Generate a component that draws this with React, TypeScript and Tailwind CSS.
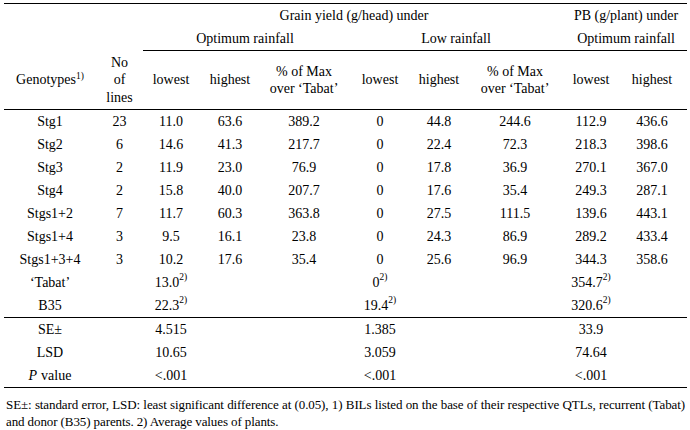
import React from "react";

const cols = "grid grid-cols-[92px_47px_56px_62px_86px_66px_52px_100px_52px_70px]";

const Sup = ({ children }: { children: React.ReactNode }) => (
  <span className="text-[9.5px] relative top-[-5px] leading-none">{children}</span>
);

type Cell = React.ReactNode;

const data: Cell[][] = [
  ["Stg1", "23", "11.0", "63.6", "389.2", "0", "44.8", "244.6", "112.9", "436.6"],
  ["Stg2", "6", "14.6", "41.3", "217.7", "0", "22.4", "72.3", "218.3", "398.6"],
  ["Stg3", "2", "11.9", "23.0", "76.9", "0", "17.8", "36.9", "270.1", "367.0"],
  ["Stg4", "2", "15.8", "40.0", "207.7", "0", "17.6", "35.4", "249.3", "287.1"],
  ["Stgs1+2", "7", "11.7", "60.3", "363.8", "0", "27.5", "111.5", "139.6", "443.1"],
  ["Stgs1+4", "3", "9.5", "16.1", "23.8", "0", "24.3", "86.9", "289.2", "433.4"],
  ["Stgs1+3+4", "3", "10.2", "17.6", "35.4", "0", "25.6", "96.9", "344.3", "358.6"],
  [
    "\u2018Tabat\u2019",
    "",
    <>13.0<Sup>2)</Sup></>,
    "",
    "",
    <>0<Sup>2)</Sup></>,
    "",
    "",
    <>354.7<Sup>2)</Sup></>,
    "",
  ],
  [
    "B35",
    "",
    <>22.3<Sup>2)</Sup></>,
    "",
    "",
    <>19.4<Sup>2)</Sup></>,
    "",
    "",
    <>320.6<Sup>2)</Sup></>,
    "",
  ],
];

const stats: Cell[][] = [
  ["SE\u00b1", "", "4.515", "", "", "1.385", "", "", "33.9", ""],
  ["LSD", "", "10.65", "", "", "3.059", "", "", "74.64", ""],
  [<><i className="mr-[4px]">P</i>value</>, "", "<.001", "", "", "<.001", "", "", "<.001", ""],
];

function Row({ cells }: { cells: Cell[] }) {
  return (
    <div className={cols}>
      {cells.map((c, i) => (
        <div key={i} className="h-[23px] flex items-center justify-center whitespace-nowrap">
          {c}
        </div>
      ))}
    </div>
  );
}

export default function App() {
  return (
    <div className="w-[690px] h-[430px] bg-white text-black font-[family-name:'Liberation_Serif','Times_New_Roman',serif] text-[14px] leading-[17.5px] overflow-hidden">
      <div className="pt-[3px] pl-[4px]">
        <div className="w-[683px] border-t border-black">
          {/* header row 1 */}
          <div className={cols}>
            <div className="col-span-2 h-[23px]" />
            <div className="col-span-6 h-[23px] flex items-center justify-center whitespace-nowrap">
              Grain yield (g/head) under
            </div>
            <div className="col-span-2 h-[23px] flex items-center justify-center whitespace-nowrap">
              PB (g/plant) under
            </div>
          </div>
          {/* header row 2 */}
          <div className={cols}>
            <div className="col-span-2 h-[24px]" />
            <div className="col-span-3 h-[24px] border-b border-black flex items-center justify-center whitespace-nowrap">
              Optimum rainfall
            </div>
            <div className="col-span-3 h-[24px] border-b border-black flex items-center justify-center whitespace-nowrap">
              Low rainfall
            </div>
            <div className="col-span-2 h-[24px] border-b border-black flex items-center justify-center whitespace-nowrap">
              Optimum rainfall
            </div>
          </div>
          {/* header row 3 */}
          <div className={`${cols} border-b border-black`}>
            {[
              <>Genotypes<Sup>1)</Sup></>,
              <>No<br />of<br />lines</>,
              "lowest",
              "highest",
              <>% of Max<br />over {"\u2018Tabat\u2019"}</>,
              "lowest",
              "highest",
              <>% of Max<br />over {"\u2018Tabat\u2019"}</>,
              "lowest",
              "highest",
            ].map((c, i) => (
              <div key={i} className="h-[58px] flex items-center justify-center text-center whitespace-nowrap">
                <div>{c}</div>
              </div>
            ))}
          </div>
          <div className="border-b border-black">
            {data.map((r, i) => (
              <Row key={i} cells={r} />
            ))}
          </div>
          <div className="border-b border-black">
            {stats.map((r, i) => (
              <Row key={i} cells={r} />
            ))}
          </div>
        </div>
      </div>
      <div className="pl-[6px] pt-[8px] text-[13px] leading-[17px] tracking-[-0.1px]">
        <div className="w-[679px] text-justify [text-align-last:justify] whitespace-nowrap">
          SE{"\u00b1"}: standard error, LSD: least significant difference at (0.05), 1) BILs listed on the base of their respective QTLs, recurrent (Tabat)
        </div>
        <div>and donor (B35) parents. 2) Average values of plants.</div>
      </div>
    </div>
  );
}
